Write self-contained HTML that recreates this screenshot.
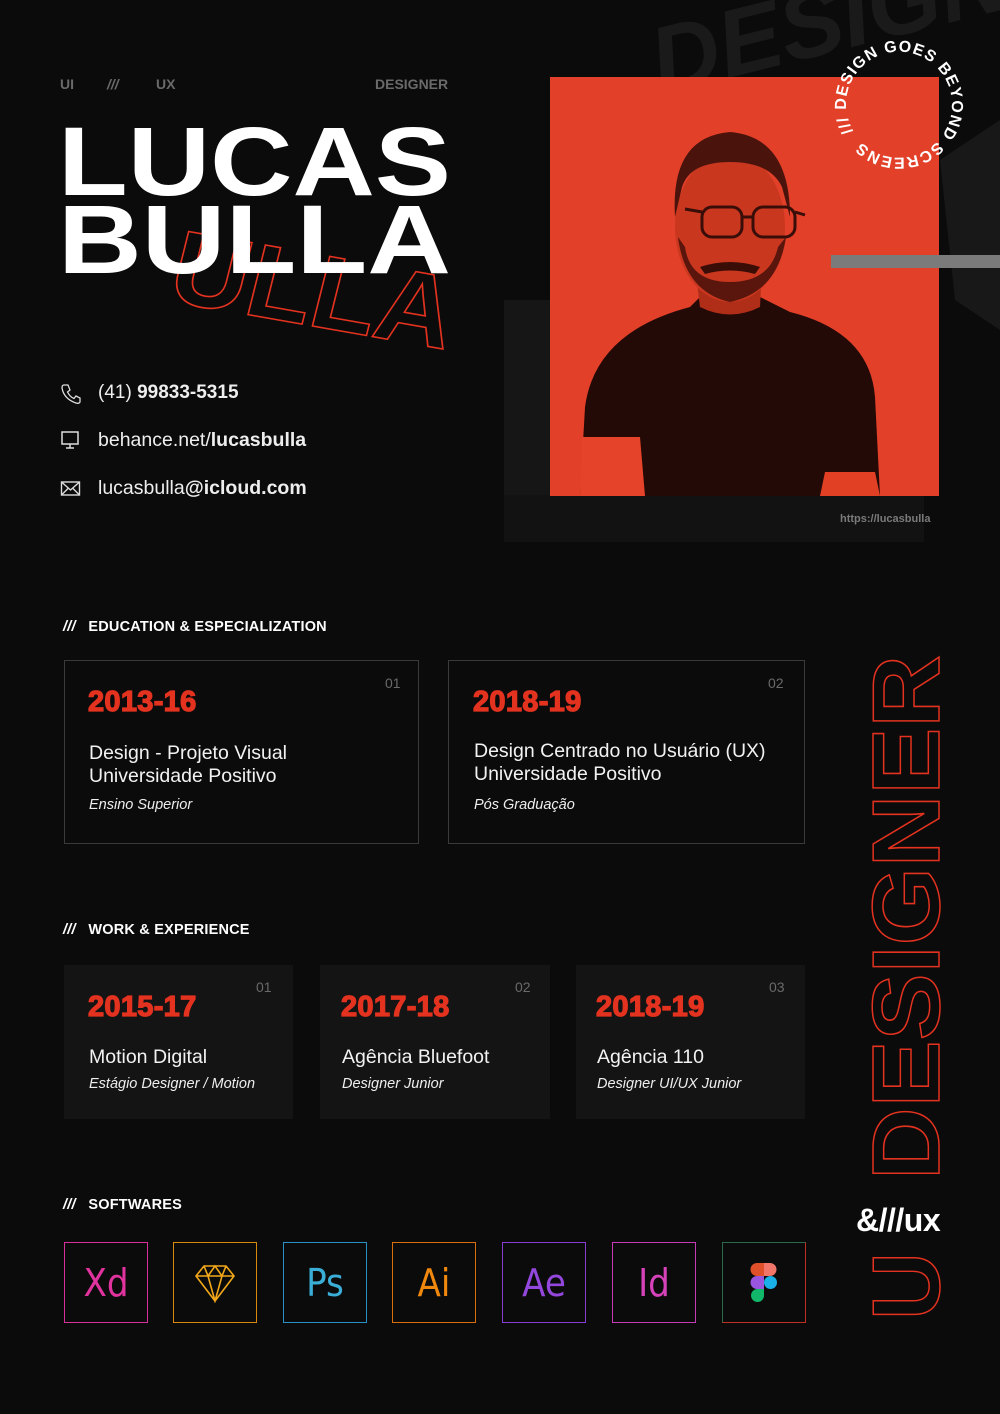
<!DOCTYPE html>
<html><head><meta charset="utf-8"><style>
*{margin:0;padding:0;box-sizing:border-box}
body{width:1000px;height:1414px;background:#0b0b0b;position:relative;overflow:hidden;font-family:"Liberation Sans",sans-serif;color:#fff}
.a{position:absolute;white-space:nowrap}
.g{color:#6a6a6a;font-weight:bold;font-size:14px}
.h{font-weight:bold;font-size:14.5px;letter-spacing:0.2px}
.card{position:absolute;border:1px solid #3a3a3a}
.wc{position:absolute;background:#141414}
.yr{position:absolute;color:#e3321f;font-weight:900;font-size:29px;letter-spacing:0.3px;-webkit-text-stroke:1.3px #e3321f}
.num{position:absolute;color:#6a6a6a;font-size:14px}
.t{position:absolute;font-size:19.5px;line-height:23px;color:#f2f2f2}
.s{position:absolute;font-size:14.5px;font-style:italic;color:#eee}
.sw{position:absolute;top:1242px;width:84px;height:81px;border:1px solid;display:flex;align-items:center;justify-content:center;font-size:38px;font-family:"DejaVu Sans Condensed","Liberation Sans",sans-serif}
</style></head><body>
<svg class="a" style="left:0;top:0" width="1000" height="560">
  <text x="660" y="95" font-size="95" font-weight="bold" font-style="italic" fill="#1a1a1a" transform="rotate(-14 660 95)" font-family="Liberation Sans">DESIGN</text>
  <path d="M940 160 L1000 120 L1000 330 L955 300Z" fill="#181818"/>
  <rect x="504" y="300" width="360" height="242" fill="#161616"/>
  <rect x="504" y="495" width="420" height="47" fill="#121212"/>
</svg>
<svg class="a" style="left:550px;top:77px" width="389" height="419">
  <rect width="389" height="419" fill="#e3402a"/>
  <path d="M30 419 L35 330 Q45 255 140 230 L150 220 L210 220 L240 235 Q320 255 325 320 L330 419Z" fill="#240a06"/>
  <path d="M30 419 L32 360 L90 360 L95 419Z" fill="#e5432a"/>
  <path d="M270 419 L275 395 L325 395 L330 419Z" fill="#e24025"/>
  <path d="M145 190 L150 230 Q180 245 210 230 L212 190Z" fill="#b02d18"/>
  <ellipse cx="180" cy="150" rx="55" ry="75" fill="#c9371f"/>
  <path d="M125 140 Q120 60 180 55 Q240 60 240 140 L232 110 Q220 85 180 85 Q140 85 132 110Z" fill="#4a130b"/>
  <path d="M128 160 Q135 215 180 225 Q228 215 236 160 L228 170 Q220 205 180 205 Q140 205 135 170Z" fill="#5a160c"/>
  <path d="M150 190 Q180 180 210 190 L205 197 Q180 190 155 197Z" fill="#3a0d07"/>
  <g fill="none" stroke="#3a0e08" stroke-width="3"><rect x="152" y="130" width="40" height="30" rx="10"/><rect x="203" y="130" width="42" height="30" rx="10"/><path d="M192 140 L203 140 M152 135 L135 132 M245 135 L255 138"/></g>
</svg>
<div class="a" style="left:831px;top:255px;width:169px;height:13px;background:#7b7b7b"></div>
<div class="a" style="left:840px;top:513px;font-size:11px;font-weight:bold;color:#7a7a7a">https://lucasbulla</div>
<svg class="a" style="left:820px;top:26px" width="160" height="160">
  <defs><path id="c" d="M33 105 A53 53 0 1 1 125 105 A53 53 0 0 1 33 105"/></defs>
  <text font-size="16" font-weight="bold" fill="#fff" font-family="Liberation Sans" textLength="318" lengthAdjust="spacing"><textPath href="#c" textLength="318">/// DESIGN GOES BEYOND SCREENS</textPath></text>
</svg>
<div class="a g" style="left:60px;top:76px">UI</div>
<div class="a g" style="left:107px;top:76px;font-style:italic">///</div>
<div class="a g" style="left:156px;top:76px">UX</div>
<div class="a g" style="left:375px;top:76px">DESIGNER</div>
<svg class="a" style="left:0;top:100px" width="500" height="280">
  <g transform="translate(165 200) rotate(10) skewX(-4)">
    <text x="0" y="0" font-size="104" font-weight="bold" fill="none" stroke="#e3321f" stroke-width="1.6" textLength="285" lengthAdjust="spacingAndGlyphs" font-family="Liberation Sans">ULLA</text>
  </g>
  <text x="58" y="95" font-size="97" font-weight="bold" fill="#fff" textLength="393" lengthAdjust="spacingAndGlyphs" font-family="Liberation Sans">LUCAS</text>
  <text x="58" y="173" font-size="97" font-weight="bold" fill="#fff" textLength="393" lengthAdjust="spacingAndGlyphs" font-family="Liberation Sans">BULLA</text>
</svg>
<svg class="a" style="left:60px;top:383px" width="22" height="22" fill="none" stroke="#ddd" stroke-width="1.3"><path d="M4 2 L8 2 L10 7 L7.5 9 Q10 14 14 15.5 L16 13 L20 15 L20 19 Q19 21 16 20 Q4 16 2 5 Q2 2 4 2Z"/></svg>
<div class="a" style="left:98px;top:382px;font-size:19px;color:#eee">(41) <b>99833-5315</b></div>
<svg class="a" style="left:60px;top:430px" width="22" height="22" fill="none" stroke="#ddd" stroke-width="1.5"><rect x="2" y="2" width="16" height="12"/><path d="M10 14 L10 18 M6 18 L14 18"/></svg>
<div class="a" style="left:98px;top:429px;font-size:19.5px;color:#eee">behance.net/<b>lucasbulla</b></div>
<svg class="a" style="left:60px;top:480px" width="22" height="18" fill="none" stroke="#ddd" stroke-width="1.4"><rect x="1.5" y="2" width="18" height="13"/><path d="M1.5 2 L10.5 10 L19.5 2 M1.5 15 L8 8.5 M19.5 15 L13 8.5"/></svg>
<div class="a" style="left:98px;top:477px;font-size:19.5px;color:#eee">lucasbulla<b>@icloud.com</b></div>
<div class="a h" style="left:63px;top:619px"><i>///</i>&nbsp;&nbsp; EDUCATION &amp; ESPECIALIZATION</div>
<div class="card" style="left:64px;top:660px;width:355px;height:184px"></div>
<div class="num" style="left:385px;top:675px">01</div>
<div class="yr" style="left:88px;top:686px">2013-16</div>
<div class="t" style="left:89px;top:742px">Design - Projeto Visual<br>Universidade Positivo</div>
<div class="s" style="left:89px;top:797px">Ensino Superior</div>
<div class="card" style="left:448px;top:660px;width:357px;height:184px"></div>
<div class="num" style="left:768px;top:675px">02</div>
<div class="yr" style="left:473px;top:686px">2018-19</div>
<div class="t" style="left:474px;top:740px">Design Centrado no Usuário (UX)<br>Universidade Positivo</div>
<div class="s" style="left:474px;top:797px">Pós Graduação</div>
<div class="a h" style="left:63px;top:922px"><i>///</i>&nbsp;&nbsp; WORK &amp; EXPERIENCE</div>
<div class="wc" style="left:64px;top:965px;width:229px;height:154px"></div>
<div class="num" style="left:256px;top:979px">01</div>
<div class="yr" style="left:88px;top:991px">2015-17</div>
<div class="t" style="left:89px;top:1046px">Motion Digital</div>
<div class="s" style="left:89px;top:1076px">Estágio Designer / Motion</div>
<div class="wc" style="left:320px;top:965px;width:230px;height:154px"></div>
<div class="num" style="left:515px;top:979px">02</div>
<div class="yr" style="left:341px;top:991px">2017-18</div>
<div class="t" style="left:342px;top:1046px">Agência Bluefoot</div>
<div class="s" style="left:342px;top:1076px">Designer Junior</div>
<div class="wc" style="left:576px;top:965px;width:229px;height:154px"></div>
<div class="num" style="left:769px;top:979px">03</div>
<div class="yr" style="left:596px;top:991px">2018-19</div>
<div class="t" style="left:597px;top:1046px">Agência 110</div>
<div class="s" style="left:597px;top:1076px">Designer UI/UX Junior</div>
<div class="a h" style="left:63px;top:1197px"><i>///</i>&nbsp;&nbsp; SOFTWARES</div>
<div class="sw" style="left:64px;border-color:#d8309a;color:#e0339e">Xd</div>
<div class="sw" style="left:173px;border-color:#d98a0e">
  <svg width="42" height="40" fill="none" stroke="#f2a81a" stroke-width="1.6"><path d="M10 3 L32 3 L40 13 L21 38 L2 13Z M2 13 L40 13 M10 3 L14 13 L21 38 L28 13 L32 3 M14 13 L21 3 L28 13"/></svg></div>
<div class="sw" style="left:283px;border-color:#2a8fc2;color:#3aaed6">Ps</div>
<div class="sw" style="left:392px;border-color:#d96e0c;color:#f0880e">Ai</div>
<div class="sw" style="left:502px;border-color:#8a3cd0;color:#9447dc">Ae</div>
<div class="sw" style="left:612px;border-color:#c63ab6;color:#d542ba">Id</div>
<div class="sw" style="left:722px;border-color:#2a6a4a #c03020 #c03020 #2a6a4a">
  <svg width="30" height="42"><path d="M8 1 h7 v13 h-7 a6.5 6.5 0 0 1 0 -13Z" fill="#e0502a"/><path d="M15 1 h6 a6.5 6.5 0 0 1 0 13 h-6Z" fill="#f0766a"/><path d="M8 14 h7 v13 h-7 a6.5 6.5 0 0 1 0 -13Z" fill="#9a55e0"/><circle cx="21.5" cy="20.5" r="6.5" fill="#1ab0e8"/><path d="M8 27 h7 v7 a6.5 6.5 0 1 1 -7 -7Z" fill="#12b86a"/></svg></div>
<svg class="a" style="left:860px;top:650px" width="90" height="680">
  <g transform="translate(79 670) rotate(-90)">
    <text x="0" y="0" font-size="96" font-weight="bold" fill="none" stroke="#e3321f" stroke-width="1.5" textLength="68" lengthAdjust="spacingAndGlyphs" font-family="Liberation Sans">U</text>
    <text x="140" y="0" font-size="96" font-weight="bold" fill="none" stroke="#e3321f" stroke-width="1.5" textLength="525" lengthAdjust="spacingAndGlyphs" font-family="Liberation Sans">DESIGNER</text>
  </g>
</svg>
<div class="a" style="left:856px;top:1202px;font-size:32px;font-weight:bold;color:#fff;letter-spacing:-0.5px">&amp;///ux</div>
</body></html>
